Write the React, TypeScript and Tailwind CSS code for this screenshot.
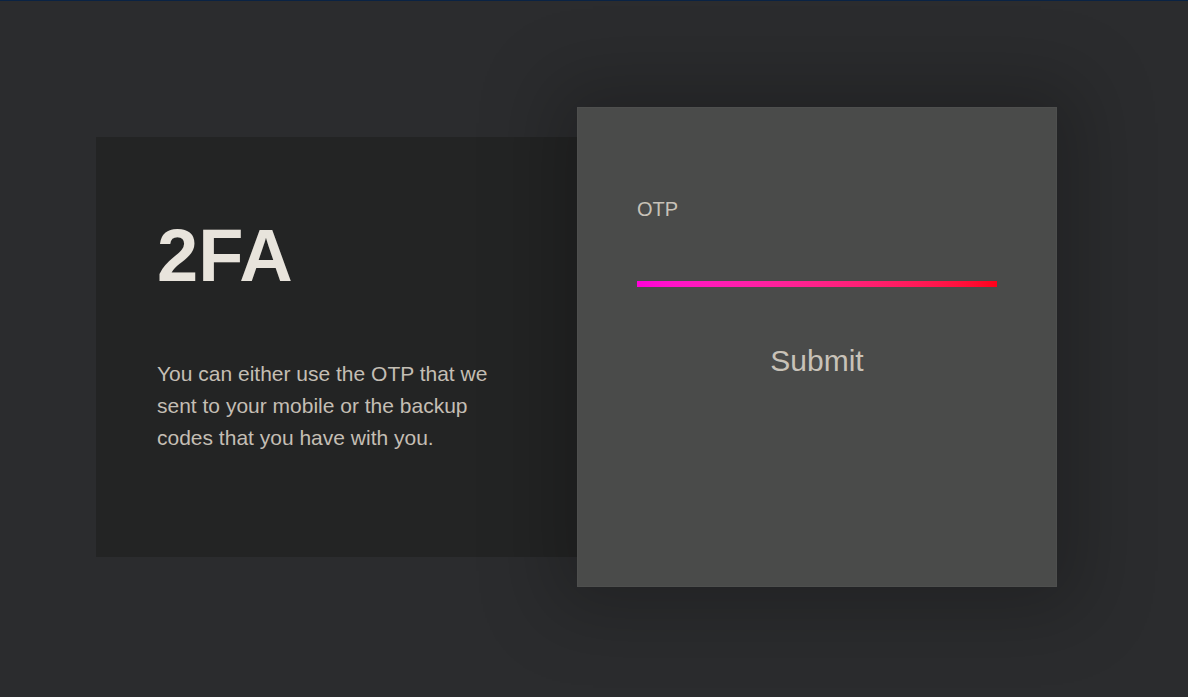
const TwoFactor = () => {
  return (
    <div className="flex h-[697px] w-full items-center border-t border-[#0a2344] bg-[#2b2c2e] pb-[4px] pl-[96px] font-['Liberation_Sans',Arial,sans-serif]">
      <div className="flex items-center">
        <div className="flex h-[420px] w-[481px] flex-col bg-[#232424] pl-[61px]">
          <h1 className="mt-[82px] text-[74px] leading-none font-bold text-[#e8e4dc]">2FA</h1>
          <p className="mt-[65px] w-[350px] text-[21px] leading-[32px] text-[#c4beb4]">
            You can either use the OTP that we sent to your mobile or the backup codes that you have with you.
          </p>
        </div>
        <div className="flex h-[480px] w-[480px] flex-col border border-[#4e4f4e] bg-[#4a4b4a] px-[59px] shadow-[0_0_70px_25px_rgba(0,0,0,0.22)]">
          <label className="mt-[91px] text-[20px] leading-none text-[#c8c2b8]">OTP</label>
          <input
            type="text"
            className="mt-[34px] h-[28px] w-[360px] bg-transparent text-[18px] text-[#e8e4dc] outline-none"
            aria-label="OTP"
          />
          <div className="h-[6px] w-[360px] bg-gradient-to-r from-[#ff00d8] to-[#ff0018]" />
          <button className="mt-[59px] self-center text-[30px] leading-none text-[#c8c2b8]">Submit</button>
        </div>
      </div>
    </div>
  );
};

export default function App() {
  return <TwoFactor />;
}
